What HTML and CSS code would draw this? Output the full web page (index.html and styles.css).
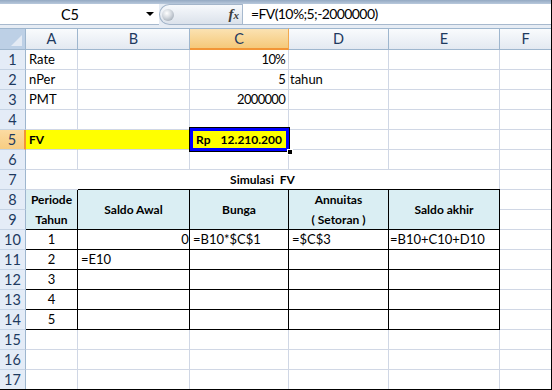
FILE: index.html
```html
<!DOCTYPE html>
<html lang="id">
<head>
  <meta charset="UTF-8">
  <title>Simulasi FV</title>
  <link rel="stylesheet" href="styles.css">
</head>
<body>
  <div class="excel">
    <div class="formula-bar">
      <div class="name-box">
        <span class="name">C5</span>
        <span class="drop"></span>
      </div>
      <div class="fx-area">
        <span class="knob"></span>
        <span class="fx">f<small>x</small></span>
      </div>
      <div class="formula">=FV(10%;5;-2000000)</div>
    </div>

    <div class="sheet">
      <!-- column headers -->
      <div class="corner"><span class="tri"></span></div>
      <div class="ch">A</div>
      <div class="ch">B</div>
      <div class="ch sel">C</div>
      <div class="ch">D</div>
      <div class="ch">E</div>
      <div class="ch">F</div>

      <!-- 1 -->
      <div class="rh">1</div>
      <div class="c">Rate</div>
      <div class="c"></div>
      <div class="c num">10%</div>
      <div class="c"></div>
      <div class="c"></div>
      <div class="c"></div>

      <!-- 2 -->
      <div class="rh">2</div>
      <div class="c">nPer</div>
      <div class="c"></div>
      <div class="c num">5</div>
      <div class="c tight">tahun</div>
      <div class="c"></div>
      <div class="c"></div>

      <!-- 3 -->
      <div class="rh">3</div>
      <div class="c">PMT</div>
      <div class="c"></div>
      <div class="c num">2000000</div>
      <div class="c"></div>
      <div class="c"></div>
      <div class="c"></div>

      <!-- 4 -->
      <div class="rh">4</div>
      <div class="c"></div>
      <div class="c"></div>
      <div class="c"></div>
      <div class="c"></div>
      <div class="c"></div>
      <div class="c"></div>

      <!-- 5 -->
      <div class="rh sel">5</div>
      <div class="c hl b">FV</div>
      <div class="c hl"></div>
      <div class="c hl b fv">
        <span>Rp</span><span>12.210.200</span>
        <span class="cursor"><span class="handle"></span></span>
      </div>
      <div class="c"></div>
      <div class="c"></div>
      <div class="c"></div>

      <!-- 6 -->
      <div class="rh">6</div>
      <div class="c"></div>
      <div class="c"></div>
      <div class="c"></div>
      <div class="c"></div>
      <div class="c"></div>
      <div class="c"></div>

      <!-- 7 -->
      <div class="rh">7</div>
      <div class="c b title">Simulasi&nbsp; FV</div>
      <div class="c"></div>

      <!-- 8 / 9 header -->
      <div class="rh">8</div>
      <div class="c th two">Periode<br>Tahun</div>
      <div class="c th top">Saldo Awal</div>
      <div class="c th top">Bunga</div>
      <div class="c th top two">Annuitas<br>( Setoran )</div>
      <div class="c th top">Saldo akhir</div>
      <div class="c"></div>
      <div class="rh">9</div>
      <div class="c"></div>

      <!-- 10 -->
      <div class="rh">10</div>
      <div class="c t mid">1</div>
      <div class="c t num zero">0</div>
      <div class="c t">=B10*$C$1</div>
      <div class="c t">=$C$3</div>
      <div class="c t tight">=B10+C10+D10</div>
      <div class="c"></div>

      <!-- 11 -->
      <div class="rh">11</div>
      <div class="c t mid">2</div>
      <div class="c t">=E10</div>
      <div class="c t"></div>
      <div class="c t"></div>
      <div class="c t"></div>
      <div class="c"></div>

      <!-- 12 -->
      <div class="rh">12</div>
      <div class="c t mid">3</div>
      <div class="c t"></div>
      <div class="c t"></div>
      <div class="c t"></div>
      <div class="c t"></div>
      <div class="c"></div>

      <!-- 13 -->
      <div class="rh">13</div>
      <div class="c t mid">4</div>
      <div class="c t"></div>
      <div class="c t"></div>
      <div class="c t"></div>
      <div class="c t"></div>
      <div class="c"></div>

      <!-- 14 -->
      <div class="rh">14</div>
      <div class="c t mid">5</div>
      <div class="c t"></div>
      <div class="c t"></div>
      <div class="c t"></div>
      <div class="c t"></div>
      <div class="c"></div>

      <!-- 15 -->
      <div class="rh">15</div>
      <div class="c"></div>
      <div class="c"></div>
      <div class="c"></div>
      <div class="c"></div>
      <div class="c"></div>
      <div class="c"></div>

      <!-- 16 -->
      <div class="rh">16</div>
      <div class="c"></div>
      <div class="c"></div>
      <div class="c"></div>
      <div class="c"></div>
      <div class="c"></div>
      <div class="c"></div>

      <!-- 17 -->
      <div class="rh">17</div>
      <div class="c"></div>
      <div class="c"></div>
      <div class="c"></div>
      <div class="c"></div>
      <div class="c"></div>
      <div class="c"></div>
    </div>
  </div>
</body>
</html>
```

FILE: styles.css
```css
* {
  box-sizing: border-box;
}
body {
  margin: 0;
  background-color: #fff;
  font-family: Lato, 'Liberation Sans', sans-serif;
  color: #000;
}
.excel {
  box-sizing: content-box;
  width: 551px;
  height: 389px;
  border-right: 1px solid #000;
  border-bottom: 1px solid #000;
  overflow: hidden;
}

/* formula bar */
.formula-bar {
  display: flex;
  height: 28px;
  padding: 4px 0 3px;
  background: linear-gradient(to bottom, #94a9c2 0, #b9c9dc 4px, #e6ecf4 4px);
}
.name-box,
.fx-area,
.formula {
  height: 21px;
  border-bottom: 1px solid #a7b9ce;
}
.name-box {
  display: flex;
  align-items: center;
  width: 159px;
  background-color: #fff;
}
.name {
  width: 140px;
  text-align: center;
  font-size: 14.5px;
}
.drop {
  margin-left: 6px;
  border-left: 4px solid transparent;
  border-right: 4px solid transparent;
  border-top: 4px solid #000;
}
.fx-area {
  display: flex;
  align-items: center;
  justify-content: space-between;
  width: 83px;
  padding: 0 3px 0 2px;
  border: 1px solid #a3b5ca;
  border-right: none;
  border-radius: 11px 0 0 11px;
  background: linear-gradient(to bottom, #f7f9fc, #dbe2eb);
}
.knob {
  width: 12px;
  height: 12px;
  border-radius: 50%;
  background: radial-gradient(circle at 40% 35%, #ffffff 0, #d6dbe1 40%, #8e99a6 100%);
}
.fx {
  font-family: 'Liberation Serif', serif;
  font-style: italic;
  font-weight: bold;
  font-size: 15px;
  color: #3c3c3c;
}
.fx small {
  font-size: 11px;
}
.formula {
  flex: 1;
  padding-left: 8px;
  border-left: 1px solid #a7b9ce;
  background-color: #fff;
  font-size: 14px;
  letter-spacing: -0.6px;
  line-height: 20px;
}

/* sheet grid */
.sheet {
  display: grid;
  grid-template-columns: 26px 52px 112px 99px 100px 111px 52px;
  grid-template-rows: 22px repeat(17, 20px);
  width: 552px;
}
.corner {
  position: relative;
  background-color: #bdd0e6;
  border-top: 1px solid #9eb6ce;
  border-right: 1px solid #9eb6ce;
  border-bottom: 1px solid #9eb6ce;
}
.tri {
  position: absolute;
  right: 3px;
  bottom: 3px;
  border-left: 11px solid transparent;
  border-bottom: 11px solid #e3eaf4;
}
.ch {
  border-top: 1px solid #9eb6ce;
  border-right: 1px solid #9eb6ce;
  border-bottom: 1px solid #9eb6ce;
  background: linear-gradient(to bottom, #f9fbfd, #e3e9f1);
  text-align: center;
  font-size: 14.5px;
  line-height: 20px;
  color: #1e3a5f;
}
.ch.sel {
  background: linear-gradient(to bottom, #fbe2b2, #f5c979);
  border-right-color: #f2a94e;
  border-bottom: 2px solid #f29536;
}
.rh {
  border-right: 1px solid #9eb6ce;
  border-bottom: 1px solid #c5d3e4;
  background-color: #e4ecf7;
  text-align: center;
  font-size: 14.5px;
  line-height: 19px;
  color: #1e3a5f;
}
.rh.sel {
  background: linear-gradient(to bottom, #fbdba2, #f7cd82);
  border-right: 2px solid #f29536;
}

/* cells */
.c {
  border-right: 1px solid #d0d7e5;
  border-bottom: 1px solid #d0d7e5;
  padding: 0 3px;
  font-size: 13px;
  line-height: 19px;
  white-space: nowrap;
}
.num {
  text-align: right;
  letter-spacing: -0.7px;
}
.tight {
  padding-left: 1px;
}
.zero {
  padding-right: 1px;
}
.mid {
  text-align: center;
}
.b {
  font-weight: bold;
  font-size: 12px;
}
.hl {
  background-color: #ffff00;
  border-right-color: #ffff00;
}
.fv {
  position: relative;
  display: flex;
  justify-content: space-between;
  padding: 0 6px;
}
.cursor {
  position: absolute;
  left: -1px;
  top: -3px;
  width: 101px;
  height: 25px;
  border: 1px solid #000;
  box-shadow: inset 0 0 0 3px #0000ff;
}
.handle {
  position: absolute;
  right: -4px;
  bottom: -4px;
  width: 6px;
  height: 6px;
  background-color: #000;
  border: 1px solid #fff;
}
.title {
  grid-column: span 5;
  text-align: center;
  border-right-color: #d0d7e5;
}

/* simulation table */
.th {
  grid-row: span 2;
  display: flex;
  align-items: center;
  justify-content: center;
  text-align: center;
  background-color: #daeef3;
  border-right-color: #000;
  border-bottom-color: #000;
  font-weight: bold;
  font-size: 12px;
  line-height: 20px;
}
.th.top {
  box-shadow: 0 -1px 0 #000;
}
.t {
  border-right-color: #000;
  border-bottom-color: #000;
}
```
